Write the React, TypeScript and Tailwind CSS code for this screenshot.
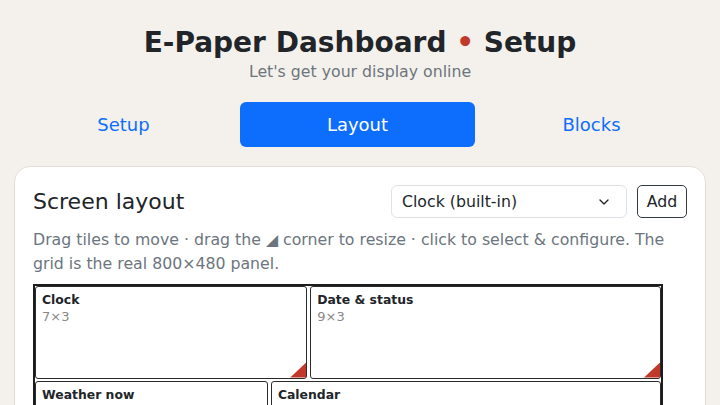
import { ChevronDown } from "lucide-react";

const tiles = [
    { name: "Clock", w: 7, h: 3, col: 1, row: 1 },
    { name: "Date & status", w: 9, h: 3, col: 8, row: 1 },
    { name: "Weather now", w: 6, h: 4, col: 1, row: 4 },
    { name: "Calendar", w: 10, h: 4, col: 7, row: 4 },
];

export default function App() {
    return (
        <div className="min-h-screen overflow-hidden bg-[#f4f1ec] font-['DejaVu_Sans',sans-serif] text-[#212529]">
            <header className="pt-[26px] text-center">
                <h1 className="text-[28px] font-bold leading-[34px]">
                    E-Paper Dashboard <span className="text-[#c0392b]">•</span> Setup
                </h1>
                <p className="mt-[2px] text-[15.75px] leading-[20px] text-[#6c757d]">Let's get your display online</p>
            </header>

            <nav className="mt-[20px] grid h-[45px] grid-cols-[233px_235px_233px] pl-[7px] text-[18px]">
                <button className="rounded-[6px] text-[#0d6efd]">Setup</button>
                <button className="rounded-[6px] bg-[#0d6efd] text-white">Layout</button>
                <button className="rounded-[6px] text-[#0d6efd]">Blocks</button>
            </nav>

            <section className="mx-[14px] mt-[19px] rounded-[16px] border border-[#e2ded7] bg-white px-[18px] pt-[18px] pb-6">
                <div className="flex h-[33px] items-center">
                    <h2 className="flex-1 text-[22px] leading-[28px]">Screen layout</h2>
                    <div className="flex h-[33px] w-[236px] items-center justify-between rounded-[6px] border border-[#dee2e6] pl-[10px] pr-[14px] text-[15.75px]">
                        <span>Clock (built-in)</span>
                        <ChevronDown size={16} strokeWidth={2} />
                    </div>
                    <button className="ml-[10px] h-[33px] w-[50px] rounded-[5px] border border-[#343a40] text-[15.75px]">Add</button>
                </div>
                <p className="mt-[10px] text-[15.75px] leading-[24px] text-[#6c757d]">
                    Drag tiles to move · drag the <span className="text-[#6c757d]">◢</span> corner to resize · click to select &amp; configure. The grid is the real 800×480 panel.
                </p>

                <div className="mt-[8px] w-[630px] border-2 border-[#1c1c1c] bg-white">
                    <div className="grid grid-cols-[repeat(16,1fr)] grid-rows-[repeat(12,29.5px)] gap-x-[3px] gap-y-[2px]">
                        {tiles.map((t) => (
                            <div
                                key={t.name}
                                className="relative rounded-[3px] border-[1.5px] border-[#2b2b2b] px-[6px] py-[5px]"
                                style={{ gridColumn: `${t.col} / span ${t.w}`, gridRow: `${t.row} / span ${t.h}` }}
                            >
                                <div className="text-[12.4px] font-bold leading-[16px]">{t.name}</div>
                                <div className="mt-[1px] text-[13px] leading-[16px] text-[#888]">
                                    {t.w}×{t.h}
                                </div>
                                <div className="absolute right-0 bottom-0 h-[15px] w-[16px] bg-[#c0392b] [clip-path:polygon(100%_0,100%_100%,0_100%)]" />
                            </div>
                        ))}
                    </div>
                </div>
            </section>
        </div>
    );
}
